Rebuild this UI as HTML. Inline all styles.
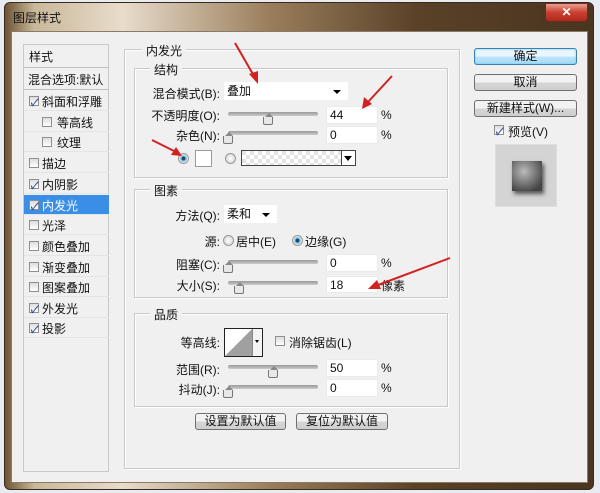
<!DOCTYPE html>
<html><head><meta charset="utf-8"><style>
*{margin:0;padding:0;box-sizing:border-box}
body{width:600px;height:493px;overflow:hidden;background:#e8ecf2;font:12px "Liberation Sans","Noto Sans CJK SC",sans-serif;color:#111;position:relative}
.a{position:absolute;white-space:nowrap}
.win{position:absolute;left:4px;top:2px;width:590px;height:488px;border-radius:6px;background:linear-gradient(90deg,#6e5436 0%,#c9b89a 5%,#e8dccb 20%,#9a7e5c 45%,#5a4128 70%,#4a3520 100%);border:1px solid #3a2a18}
.client{position:absolute;left:11px;top:31px;width:577px;height:452px;background:#f0f0f0;border:1px solid #8a7a66}
.box{position:absolute;border:1px solid #c8c8c8;box-shadow:1px 1px 0 #fff inset,1px 1px 0 #fff}
.ttl{position:absolute;background:#f0f0f0;padding:0 4px}
.cb{position:absolute;width:10px;height:10px;border:1px solid #8f8f8f;background:linear-gradient(#ddd,#fff)}
.cb.on::after{content:"✓";position:absolute;left:0;top:-3px;font-size:10px;color:#2a4a8a;font-weight:bold}
.row{position:absolute;left:0;width:85px;height:20px;border-bottom:1px solid #e4e4e4}
.in{position:absolute;background:#fff;border:1px solid #eaeaea;padding-left:3px;line-height:17px}
.sl{position:absolute;height:4px;background:linear-gradient(#999,#ccc);border-radius:2px}
.th{position:absolute;width:10px;height:8px;border:1px solid #777;border-top:none;background:#e8e8e8;border-radius:0 0 2px 2px}
.th::before{content:"";position:absolute;left:1px;top:-4px;border-left:4px solid transparent;border-right:4px solid transparent;border-bottom:4px solid #888}
.btn{position:absolute;height:17px;border:1px solid #707070;border-radius:3px;background:linear-gradient(#f2f2f2 50%,#d5d5d5 50%,#cfcfcf);text-align:center;line-height:15px}
.rad{position:absolute;width:11px;height:11px;border-radius:50%;border:1px solid #999;background:radial-gradient(#fff,#ccc)}
.rad.on{background:radial-gradient(#1a4a6a 25%,#7ab8d8 35%,#e8f2f8 70%)}
.dd{position:absolute;background:#fff;padding-left:3px;line-height:18px}
.dd::after{content:"";position:absolute;right:7px;top:8px;border-left:4px solid transparent;border-right:4px solid transparent;border-top:4px solid #000}
</style></head><body>
<div class="win"></div>
<div class="a" style="left:13px;top:9px;color:#111">图层样式</div>
<div class="a" style="left:545px;top:3px;width:43px;height:19px;border-radius:0 0 4px 4px;background:linear-gradient(#e8a090,#c84030 50%,#b02a1c);border:1px solid #6a2a20;color:#fff;text-align:center;font-weight:bold;line-height:17px">✕</div>
<div class="client"></div>

<!-- left list -->
<div class="a" style="left:23px;top:44px;width:86px;height:428px;border:1px solid #c8c8c8;background:#f0f0f0">
<div class="row" style="top:0;height:23px;border-bottom:1px solid #c0c0c0"><span class="a" style="left:5px;top:3px">样式</span></div>
<div class="row" style="top:23px;height:22px;border-bottom:1px solid #c0c0c0"><span class="a" style="left:4px;top:3px">混合选项:默认</span></div>
<div class="row" style="top:46px"><i class="cb on" style="left:5px;top:5px"></i><span class="a" style="left:18px;top:2px">斜面和浮雕</span></div>
<div class="row" style="top:67px"><i class="cb" style="left:18px;top:5px"></i><span class="a" style="left:33px;top:2px">等高线</span></div>
<div class="row" style="top:87px"><i class="cb" style="left:18px;top:5px"></i><span class="a" style="left:33px;top:2px">纹理</span></div>
<div class="row" style="top:108px"><i class="cb" style="left:5px;top:5px"></i><span class="a" style="left:18px;top:2px">描边</span></div>
<div class="row" style="top:129px"><i class="cb on" style="left:5px;top:5px"></i><span class="a" style="left:18px;top:2px">内阴影</span></div>
<div class="row" style="top:150px;background:#3a8ee6;color:#fff"><i class="cb on" style="left:5px;top:5px"></i><span class="a" style="left:18px;top:2px">内发光</span></div>
<div class="row" style="top:170px"><i class="cb" style="left:5px;top:5px"></i><span class="a" style="left:18px;top:2px">光泽</span></div>
<div class="row" style="top:191px"><i class="cb" style="left:5px;top:5px"></i><span class="a" style="left:18px;top:2px">颜色叠加</span></div>
<div class="row" style="top:212px"><i class="cb" style="left:5px;top:5px"></i><span class="a" style="left:18px;top:2px">渐变叠加</span></div>
<div class="row" style="top:232px"><i class="cb" style="left:5px;top:5px"></i><span class="a" style="left:18px;top:2px">图案叠加</span></div>
<div class="row" style="top:253px"><i class="cb on" style="left:5px;top:5px"></i><span class="a" style="left:18px;top:2px">外发光</span></div>
<div class="row" style="top:273px"><i class="cb on" style="left:5px;top:5px"></i><span class="a" style="left:18px;top:2px">投影</span></div>
</div>

<!-- main -->
<div class="box" style="left:124px;top:49px;width:336px;height:420px"></div>
<div class="ttl" style="left:142px;top:42px">内发光</div>
<div class="box" style="left:134px;top:68px;width:314px;height:110px"></div>
<div class="ttl" style="left:150px;top:61px">结构</div>
<div class="a" style="left:150px;top:85px;width:70px;text-align:right">混合模式(B):</div>
<div class="dd" style="left:224px;top:82px;width:124px;height:18px">叠加</div>
<div class="a" style="left:150px;top:107px;width:70px;text-align:right">不透明度(O):</div>
<div class="sl" style="left:228px;top:112px;width:90px"></div><div class="th" style="left:263px;top:117px"></div>
<div class="in" style="left:326px;top:106px;width:52px;height:18px">44</div><div class="a" style="left:381px;top:108px">%</div>
<div class="a" style="left:150px;top:127px;width:70px;text-align:right">杂色(N):</div>
<div class="sl" style="left:228px;top:131px;width:90px"></div><div class="th" style="left:223px;top:136px"></div>
<div class="in" style="left:326px;top:126px;width:52px;height:18px">0</div><div class="a" style="left:381px;top:128px">%</div>
<div class="rad on" style="left:178px;top:153px"></div>
<div class="a" style="left:195px;top:150px;width:17px;height:17px;background:#fff;border:1px solid #999"></div>
<div class="rad" style="left:225px;top:153px"></div>
<div class="a" style="left:241px;top:150px;width:115px;height:16px;border:1px solid #444;background:repeating-conic-gradient(#fff 0 25%,#e4e4e4 0 50%) 0 0/8px 8px"><span style="position:absolute;right:0;top:0;width:14px;height:14px;background:#fff;border-left:1px solid #444"></span><span style="position:absolute;right:3px;top:5px;border-left:4px solid transparent;border-right:4px solid transparent;border-top:5px solid #000"></span></div>

<div class="box" style="left:134px;top:189px;width:314px;height:109px"></div>
<div class="ttl" style="left:150px;top:182px">图素</div>
<div class="a" style="left:150px;top:207px;width:70px;text-align:right">方法(Q):</div>
<div class="dd" style="left:224px;top:205px;width:53px;height:18px">柔和</div>
<div class="a" style="left:150px;top:233px;width:70px;text-align:right">源:</div>
<div class="rad" style="left:223px;top:235px"></div><div class="a" style="left:236px;top:233px">居中(E)</div>
<div class="rad on" style="left:292px;top:235px"></div><div class="a" style="left:305px;top:233px">边缘(G)</div>
<div class="a" style="left:150px;top:256px;width:70px;text-align:right">阻塞(C):</div>
<div class="sl" style="left:228px;top:260px;width:90px"></div><div class="th" style="left:223px;top:265px"></div>
<div class="in" style="left:326px;top:254px;width:52px;height:18px">0</div><div class="a" style="left:381px;top:256px">%</div>
<div class="a" style="left:150px;top:277px;width:70px;text-align:right">大小(S):</div>
<div class="sl" style="left:228px;top:281px;width:90px"></div><div class="th" style="left:234px;top:286px"></div>
<div class="in" style="left:326px;top:276px;width:52px;height:17px">18</div><div class="a" style="left:381px;top:277px">像素</div>

<div class="box" style="left:134px;top:313px;width:314px;height:94px"></div>
<div class="ttl" style="left:150px;top:306px">品质</div>
<div class="a" style="left:150px;top:334px;width:70px;text-align:right">等高线:</div>
<div class="a" style="left:224px;top:328px;width:39px;height:29px;border:1px solid #222;background:#fff;overflow:hidden"><svg width="27" height="27" style="position:absolute;left:0;top:0"><polygon points="0,27 27,0 27,27" fill="#a0a0a0"/></svg><span style="position:absolute;right:0;top:0;width:10px;height:27px;border-left:1px solid #888;background:#f4f4f4"></span><span style="position:absolute;right:3px;top:11px;border-left:2px solid transparent;border-right:2px solid transparent;border-top:3px solid #000"></span></div>
<i class="cb" style="left:275px;top:336px"></i><div class="a" style="left:289px;top:334px">消除锯齿(L)</div>
<div class="a" style="left:150px;top:361px;width:70px;text-align:right">范围(R):</div>
<div class="sl" style="left:228px;top:365px;width:90px"></div><div class="th" style="left:268px;top:370px"></div>
<div class="in" style="left:326px;top:359px;width:52px;height:18px">50</div><div class="a" style="left:381px;top:361px">%</div>
<div class="a" style="left:150px;top:381px;width:70px;text-align:right">抖动(J):</div>
<div class="sl" style="left:228px;top:385px;width:90px"></div><div class="th" style="left:223px;top:390px"></div>
<div class="in" style="left:326px;top:379px;width:52px;height:18px">0</div><div class="a" style="left:381px;top:381px">%</div>
<div class="btn" style="left:195px;top:413px;width:91px">设置为默认值</div>
<div class="btn" style="left:296px;top:413px;width:92px">复位为默认值</div>

<!-- right -->
<div class="btn" style="left:474px;top:48px;width:103px;border-color:#3c7fb1;box-shadow:0 0 2px #6cf inset;background:linear-gradient(#eaf6fd 50%,#bee6fd 50%,#a7d9f5)">确定</div>
<div class="btn" style="left:474px;top:74px;width:103px">取消</div>
<div class="btn" style="left:474px;top:100px;width:103px">新建样式(W)...</div>
<i class="cb on" style="left:494px;top:125px"></i><div class="a" style="left:508px;top:123px">预览(V)</div>
<div class="a" style="left:495px;top:144px;width:62px;height:63px;background:#d4d4d4;border:1px solid #ddd"><div style="position:absolute;left:16px;top:16px;width:30px;height:30px;background:radial-gradient(circle at 40% 35%,#bbb,#444 80%);box-shadow:2px 3px 4px #555"></div></div>

<!-- arrows -->
<svg class="a" style="left:0;top:0" width="600" height="493">
<g stroke="#d42020" stroke-width="2" fill="#d42020">
<line x1="235" y1="43" x2="254" y2="76"/><polygon points="258,84 249,74 258,71" stroke="none"/>
<line x1="392" y1="76" x2="368" y2="102"/><polygon points="362,109 364,97 372,104" stroke="none"/>
<line x1="152" y1="140" x2="174" y2="151"/><polygon points="182,156 171,155 176,147" stroke="none"/>
<line x1="450" y1="258" x2="378" y2="285"/><polygon points="368,289 377,280 381,289" stroke="none"/>
</g></svg>
</body></html>
